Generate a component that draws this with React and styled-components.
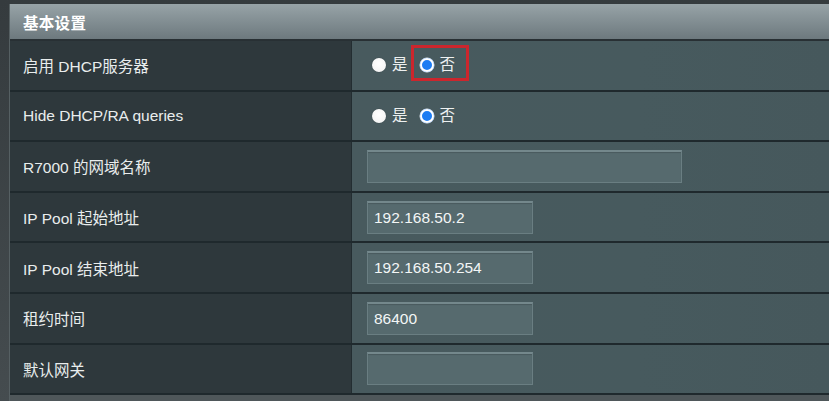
import React from "react";
import styled, { createGlobalStyle } from "styled-components";

const Global = createGlobalStyle`
  html, body { margin: 0; padding: 0; background: #3a4144; }
  body { font-family: "Liberation Sans", "Noto Sans CJK SC", sans-serif; }
  * { box-sizing: border-box; }
`;

const Page = styled.div`
  width: 829px;
  height: 401px;
  overflow: hidden;
  padding: 4px 0 0 9px;
  background: linear-gradient(#353b3e, #454c4f);
`;

const Table = styled.div`
  border-left: 1px solid #566063;
  background: #4f575a;
  height: 397px;
`;

const Header = styled.div`
  height: 37px;
  display: flex;
  align-items: center;
  padding-left: 13px;
  background: linear-gradient(#97a3a7, #6d797e);
  border-bottom: 2px solid #283034;
  color: #ffffff;
  font-size: 15.5px;
  font-weight: bold;
  letter-spacing: 0.3px;
`;

const Row = styled.div`
  display: grid;
  grid-template-columns: 341px 1fr;
  height: 50.6px;
  border-bottom: 2px solid #1f292d;
`;

const Label = styled.div`
  display: flex;
  align-items: center;
  padding-left: 13px;
  background: #2e383c;
  color: #e9eded;
  font-size: 15.5px;
`;

const Value = styled.div`
  display: flex;
  align-items: center;
  padding-left: 15px;
  background: linear-gradient(90deg, #485a5e, #475a5e 60%, #46585c);
  border-left: 1px solid #232d31;
`;

const TextBox = styled.div`
  width: ${(p) => p.$w}px;
  height: 33px;
  display: flex;
  align-items: center;
  padding-left: 6px;
  background: #566a6e;
  border: 1px solid #6a7e82;
  border-top: 2px solid #74888c;
  box-shadow: inset 0 1px 1px rgba(0, 0, 0, 0.15);
  color: #f3f6f6;
  font-size: 15.5px;
`;

const RadioGroup = styled.div`
  display: flex;
  align-items: center;
  padding-left: 5px;
  gap: 12px;
`;

const Option = styled.div`
  position: relative;
  display: flex;
  align-items: center;
  gap: 6px;
  height: 20px;
  line-height: 20px;
  color: #eef1f1;
  font-size: 15.5px;

  ${(p) =>
    p.$highlight &&
    `
    &::after {
      content: "";
      position: absolute;
      left: -9px;
      right: -14px;
      top: -10px;
      bottom: -6px;
      border: 3px solid #cc262d;
    }
  `}
`;

const Dot = styled.span`
  width: 14px;
  height: 14px;
  border-radius: 50%;
  display: inline-block;
  background: ${(p) =>
    p.$checked ? "#1c7cf3" : "radial-gradient(circle at 50% 40%, #ffffff, #f1f1f1)"};
  box-shadow: ${(p) =>
    p.$checked ? "0 0 0 2px #ffffff inset, 0 0 0 0.5px #dfe6f0" : "0 0 1px rgba(0,0,0,0.4)"};
`;

const Radios = ({ highlight }) => (
  <RadioGroup>
    <Option>
      <Dot />
      <span>是</span>
    </Option>
    <Option $highlight={highlight}>
      <Dot $checked />
      <span>否</span>
    </Option>
  </RadioGroup>
);

const rows = [
  { label: "启用 DHCP服务器", radio: true, highlight: true },
  { label: "Hide DHCP/RA queries", radio: true },
  { label: "R7000 的网域名称", input: "", w: 315 },
  { label: "IP Pool 起始地址", input: "192.168.50.2", w: 166 },
  { label: "IP Pool 结束地址", input: "192.168.50.254", w: 166 },
  { label: "租约时间", input: "86400", w: 166 },
  { label: "默认网关", input: "", w: 166 },
];

export default function App() {
  return (
    <>
      <Global />
      <Page>
        <Table>
          <Header>基本设置</Header>
          {rows.map((r) => (
            <Row key={r.label}>
              <Label>{r.label}</Label>
              <Value>
                {r.radio ? (
                  <Radios highlight={r.highlight} />
                ) : (
                  <TextBox $w={r.w}>{r.input}</TextBox>
                )}
              </Value>
            </Row>
          ))}
        </Table>
      </Page>
    </>
  );
}
